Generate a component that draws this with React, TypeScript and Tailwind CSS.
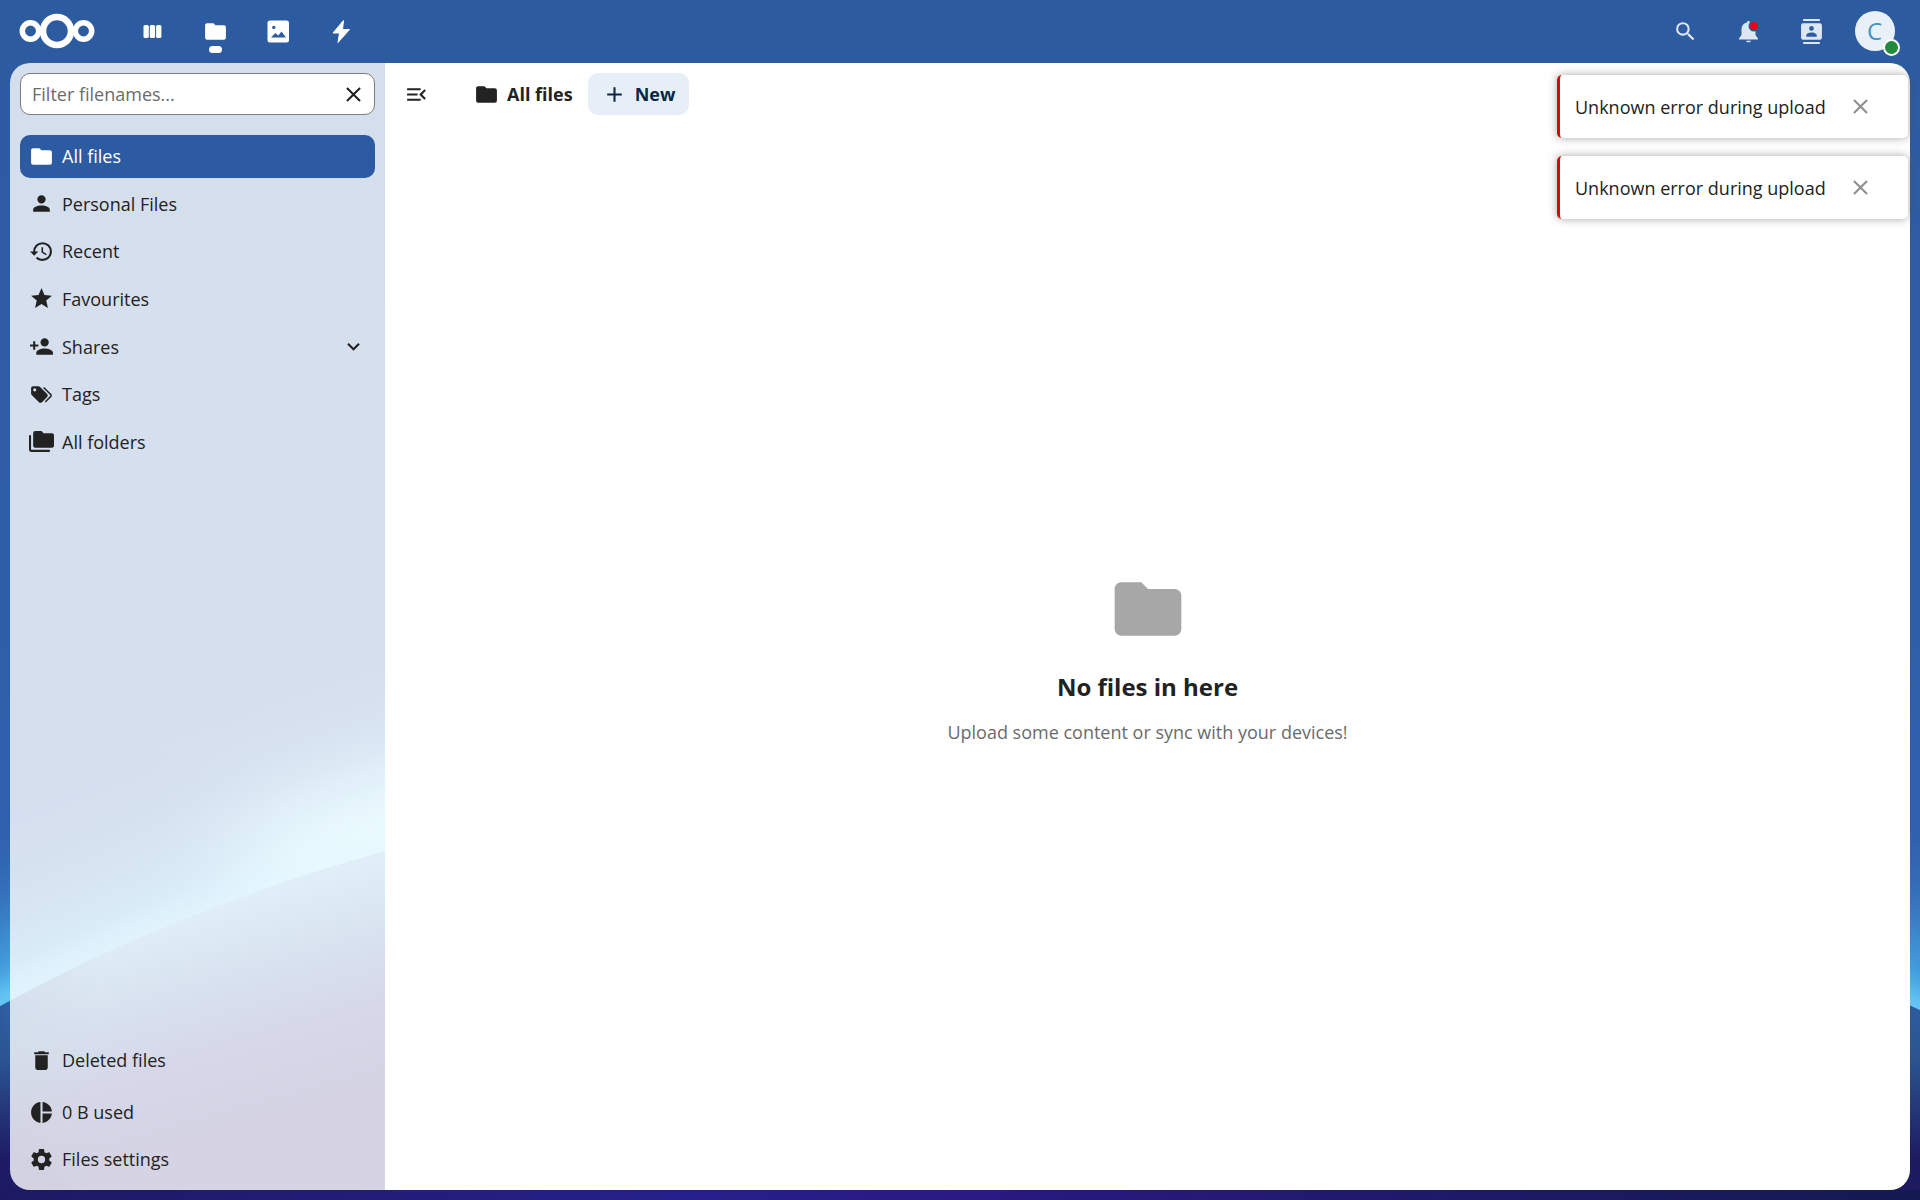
import type { ReactNode } from "react";

const ICONS = {
  folder: "M10,4H4C2.89,4 2,4.89 2,6V18A2,2 0 0,0 4,20H20A2,2 0 0,0 22,18V8C22,6.89 21.1,6 20,6H12L10,4Z",
  account: "M12,4A4,4 0 0,1 16,8A4,4 0 0,1 12,12A4,4 0 0,1 8,8A4,4 0 0,1 12,4M12,14C16.42,14 20,15.79 20,18V20H4V18C4,15.79 7.58,14 12,14Z",
  history: "M13.5,8H12V13L16.28,15.54L17,14.33L13.5,12.25V8M13,3A9,9 0 0,0 4,12H1L4.96,16.03L9,12H6A7,7 0 0,1 13,5A7,7 0 0,1 20,12A7,7 0 0,1 13,19C11.07,19 9.32,18.21 8.06,16.94L6.64,18.36C8.27,20 10.5,21 13,21A9,9 0 0,0 22,12A9,9 0 0,0 13,3",
  star: "M12,17.27L18.18,21L16.54,13.97L22,9.24L14.81,8.62L12,2L9.19,8.62L2,9.24L7.45,13.97L5.82,21L12,17.27Z",
  accountPlus: "M15,14C12.33,14 7,15.33 7,18V20H23V18C23,15.33 17.67,14 15,14M6,10V7H4V10H1V12H4V15H6V12H9V10M15,12A4,4 0 0,0 19,8A4,4 0 0,0 15,4A4,4 0 0,0 11,8A4,4 0 0,0 15,12Z",
  tags: "M5.5,9A1.5,1.5 0 0,0 7,7.5A1.5,1.5 0 0,0 5.5,6A1.5,1.5 0 0,0 4,7.5A1.5,1.5 0 0,0 5.5,9M17.41,11.58C17.77,11.94 18,12.44 18,13C18,13.55 17.78,14.05 17.41,14.41L12.41,19.41C12.05,19.77 11.55,20 11,20C10.45,20 9.95,19.78 9.58,19.41L2.59,12.42C2.22,12.05 2,11.55 2,11V6C2,4.89 2.89,4 4,4H9C9.55,4 10.05,4.22 10.41,4.58L17.41,11.58M13.54,5.71L14.54,4.71L21.41,11.58C21.78,11.94 22,12.45 22,13C22,13.55 21.78,14.05 21.42,14.41L16.04,19.79L15.04,18.79L20.75,13L13.54,5.71Z",
  folders: "M22,4H14L12,2H6A2,2 0 0,0 4,4V16A2,2 0 0,0 6,18H22A2,2 0 0,0 24,16V6A2,2 0 0,0 22,4M2,6H0V11H0V20A2,2 0 0,0 2,22H20V20H2V6Z",
  trash: "M19,4H15.5L14.5,3H9.5L8.5,4H5V6H19M6,19A2,2 0 0,0 8,21H16A2,2 0 0,0 18,19V7H6V19Z",
  pie: "M11,2V22C5.9,21.5 2,17.2 2,12C2,6.8 5.9,2.5 11,2M13,2V11H22C21.5,6.2 17.8,2.5 13,2M13,13V22C17.7,21.5 21.5,17.8 22,13H13Z",
  cog: "M12,15.5A3.5,3.5 0 0,1 8.5,12A3.5,3.5 0 0,1 12,8.5A3.5,3.5 0 0,1 15.5,12A3.5,3.5 0 0,1 12,15.5M19.43,12.97C19.47,12.65 19.5,12.33 19.5,12C19.5,11.67 19.47,11.34 19.43,11L21.54,9.37C21.73,9.22 21.78,8.95 21.66,8.73L19.66,5.27C19.54,5.05 19.27,4.96 19.05,5.05L16.56,6.05C16.04,5.66 15.5,5.32 14.87,5.07L14.5,2.42C14.46,2.18 14.25,2 14,2H10C9.75,2 9.54,2.18 9.5,2.42L9.13,5.07C8.5,5.32 7.96,5.66 7.44,6.05L4.95,5.05C4.73,4.96 4.46,5.05 4.34,5.27L2.34,8.73C2.21,8.95 2.27,9.22 2.46,9.37L4.57,11C4.53,11.34 4.5,11.67 4.5,12C4.5,12.33 4.53,12.65 4.57,12.97L2.46,14.63C2.27,14.78 2.21,15.05 2.34,15.27L4.34,18.73C4.46,18.95 4.73,19.03 4.95,18.95L7.44,17.94C7.96,18.34 8.5,18.68 9.13,18.93L9.5,21.58C9.54,21.82 9.75,22 10,22H14C14.25,22 14.46,21.82 14.5,21.58L14.87,18.93C15.5,18.67 16.04,18.34 16.56,17.94L19.05,18.95C19.27,19.03 19.54,18.95 19.66,18.73L21.66,15.27C21.78,15.05 21.73,14.78 21.54,14.63L19.43,12.97Z",
  chevronDown: "M7.41,8.58L12,13.17L16.59,8.58L18,10L12,16L6,10L7.41,8.58Z",
  close: "M19,6.41L17.59,5L12,10.59L6.41,5L5,6.41L10.59,12L5,17.59L6.41,19L12,13.41L17.59,19L19,17.59L13.41,12L19,6.41Z",
  menuOpen: "M21,15.61L19.59,17L14.58,12L19.59,7L21,8.39L17.44,12L21,15.61M3,6H16V8H3V6M3,13V11H13V13H3M3,18V16H16V18H3Z",
  plus: "M19,13H13V19H11V13H5V11H11V5H13V11H19V13Z",
  magnify: "M9.5,3A6.5,6.5 0 0,1 16,9.5C16,11.11 15.41,12.59 14.44,13.73L14.71,14H15.5L20.5,19L19,20.5L14,15.5V14.71L13.73,14.44C12.59,15.41 11.11,16 9.5,16A6.5,6.5 0 0,1 3,9.5A6.5,6.5 0 0,1 9.5,3M9.5,5C7,5 5,7 5,9.5C5,12 7,14 9.5,14C12,14 14,12 14,9.5C14,7 12,5 9.5,5Z",
  contacts: "M20,0H4V2H20V0M4,24H20V22H4V24M20,4H4A2,2 0 0,0 2,6V18A2,2 0 0,0 4,20H20A2,2 0 0,0 22,18V6A2,2 0 0,0 20,4M12,6.75A2.25,2.25 0 0,1 14.25,9A2.25,2.25 0 0,1 12,11.25A2.25,2.25 0 0,1 9.75,9A2.25,2.25 0 0,1 12,6.75M17,17H7V15.5C7,13.83 10.33,13 12,13C13.67,13 17,13.83 17,15.5V17Z",
};

type IconName = keyof typeof ICONS;

function Icon({ name, className = "size-[25px]" }: { name: IconName; className?: string }) {
  return (
    <svg viewBox="0 0 24 24" className={`shrink-0 ${className}`} fill="currentColor" aria-hidden="true">
      <path d={ICONS[name]} />
    </svg>
  );
}

function Wallpaper() {
  return (
    <svg
      className="absolute inset-0 -z-10 h-full w-full"
      viewBox="0 0 1920 1200"
      preserveAspectRatio="none"
      aria-hidden="true"
    >
      <defs>
        <linearGradient id="sky" x1="0" y1="0" x2="0" y2="1">
          <stop offset="0" stopColor="#2d5ba0" />
          <stop offset="1" stopColor="#3262b2" />
        </linearGradient>
        <linearGradient id="ground" gradientUnits="userSpaceOnUse" x1="0" y1="968" x2="60" y2="1181">
          <stop offset="0" stopColor="#64aadc" />
          <stop offset="0.35" stopColor="#3868ae" />
          <stop offset="0.65" stopColor="#323690" />
          <stop offset="1" stopColor="#2c2478" />
        </linearGradient>
        <linearGradient id="edge" gradientUnits="userSpaceOnUse" x1="0" y1="990" x2="0" y2="1160">
          <stop offset="0" stopColor="#2e5da4" />
          <stop offset="0.4" stopColor="#2b5590" />
          <stop offset="1" stopColor="#1d1a62" />
        </linearGradient>
        <linearGradient id="edgeFade" gradientUnits="userSpaceOnUse" x1="0" y1="0" x2="100" y2="0">
          <stop offset="0" stopColor="#fff" />
          <stop offset="1" stopColor="#000" />
        </linearGradient>
        <mask id="edgeMask">
          <rect width="1920" height="1200" fill="url(#edgeFade)" />
          <rect x="1800" width="120" height="1200" fill="#fff" />
        </mask>
        <linearGradient id="floor" x1="0" y1="0" x2="1" y2="0">
          <stop offset="0" stopColor="#1d1a62" />
          <stop offset="0.35" stopColor="#26208a" />
          <stop offset="0.5" stopColor="#2a1982" />
          <stop offset="1" stopColor="#141a50" />
        </linearGradient>
        <clipPath id="above">
          <path d="M0,0H1920V1010C1620,870 1300,770 960,770C700,770 480,824 385,851Q175,910 0,1006Z" />
        </clipPath>
        <filter id="glow" filterUnits="userSpaceOnUse" x="-400" y="400" width="2800" height="1000">
          <feGaussianBlur stdDeviation="50" />
        </filter>
        <filter id="glowTight" filterUnits="userSpaceOnUse" x="-400" y="400" width="2800" height="1000">
          <feGaussianBlur stdDeviation="14" />
        </filter>
      </defs>
      <rect width="1920" height="1200" fill="url(#ground)" />
      <rect width="1920" height="1200" fill="url(#edge)" mask="url(#edgeMask)" />
      <rect y="1190" width="1920" height="10" fill="url(#floor)" />
      <g clipPath="url(#above)">
        <rect width="1920" height="1200" fill="url(#sky)" />
        <path
          d="M-200,1110Q175,915 385,856C480,824 700,770 960,770C1300,770 1620,870 2120,1100"
          fill="none"
          stroke="#48b4ee"
          strokeWidth="130"
          filter="url(#glow)"
        />
        <path
          d="M270,905Q330,875 400,855C480,824 700,770 960,770"
          fill="none"
          stroke="#a8f6ff"
          strokeWidth="150"
          filter="url(#glow)"
        />
        <path
          d="M-100,1056Q175,910 385,851C480,824 700,770 960,770C1300,770 1620,870 2020,1056"
          fill="none"
          stroke="#7adcff"
          strokeWidth="22"
          filter="url(#glowTight)"
        />
      </g>
    </svg>
  );
}

function Logo() {
  return (
    <svg className="h-[36px] w-[76px]" viewBox="0 0 76 36" fill="none" stroke="#fff" aria-hidden="true">
      <circle cx="38" cy="18" r="14" strokeWidth="6.5" />
      <circle cx="11.5" cy="18" r="8.2" strokeWidth="5.5" />
      <circle cx="64.5" cy="18" r="8.2" strokeWidth="5.5" />
    </svg>
  );
}

function HeaderLink({ label, active, children }: { label: string; active?: boolean; children: ReactNode }) {
  return (
    <a href="#" aria-label={label} className="relative flex h-[62px] w-[63px] items-center justify-center text-white">
      {children}
      {active && <span className="absolute bottom-[9px] left-[25px] h-[7px] w-[13px] rounded-full bg-white" />}
    </a>
  );
}

function Header() {
  return (
    <header className="flex shrink-0 items-center justify-between pr-[14px] pb-px pl-[19px]">
      <div className="flex items-center">
        <a href="#" aria-label="Nextcloud">
          <Logo />
        </a>
        <nav aria-label="Apps" className="ml-[26px] flex">
          <HeaderLink label="Dashboard">
            <svg className="size-[25px]" viewBox="0 0 25 25" fill="#fff">
              <rect x="3.5" y="6" width="5.3" height="13" rx="1.5" />
              <rect x="9.8" y="6" width="5.3" height="13" rx="1.5" />
              <rect x="16.1" y="6" width="5.3" height="13" rx="1.5" />
            </svg>
          </HeaderLink>
          <HeaderLink label="Files" active>
            <Icon name="folder" />
          </HeaderLink>
          <HeaderLink label="Photos">
            <svg className="size-[25px]" viewBox="0 0 25 25" fill="#fff">
              <path
                fillRule="evenodd"
                d="M4,1.5H20.5A2.5,2.5 0 0 1 23,4V21A2.5,2.5 0 0 1 20.5,23.5H4A2.5,2.5 0 0 1 1.5,21V4A2.5,2.5 0 0 1 4,1.5ZM7.8,6.7A1.7,1.7 0 1 0 7.8,10.1A1.7,1.7 0 1 0 7.8,6.7ZM5,18.5H20L15.5,12.5L12.3,16.5L9.3,14Z"
              />
            </svg>
          </HeaderLink>
          <HeaderLink label="Activity">
            <svg className="size-[25px]" viewBox="0 0 25 25" fill="#fff" stroke="#fff" strokeLinejoin="round">
              <path d="M14.5,1.5L4,14H10.5L9,23.5L20.5,10.5H13.5Z" />
            </svg>
          </HeaderLink>
        </nav>
      </div>
      <div className="flex items-center text-[#dfe6f3]">
        <button type="button" aria-label="Search" className="flex h-[62px] w-[63px] items-center justify-center">
          <Icon name="magnify" />
        </button>
        <button type="button" aria-label="Notifications" className="flex h-[62px] w-[63px] items-center justify-center">
          <svg className="size-[25px]" viewBox="0 0 25 25" fill="currentColor">
            <path d="M11,3.5C11,1.5 14,1.5 14,3.5C18,4.5 19.5,7 19.5,11V16L22,19.5V20.5H3V19.5L5.5,16V11C5.5,7 7,4.5 11,3.5Z M10,21.7H15C14.5,23.8 10.5,23.8 10,21.7Z" />
            <circle cx="18" cy="7" r="5.5" fill="#2d5ba1" />
            <circle cx="18" cy="7" r="4" fill="#e40613" />
          </svg>
        </button>
        <button type="button" aria-label="Contacts" className="flex h-[62px] w-[63px] items-center justify-center">
          <Icon name="contacts" />
        </button>
        <button type="button" aria-label="Account menu" className="flex h-[62px] w-[63px] items-center justify-center">
          <span className="relative flex size-[40px] items-center justify-center rounded-full bg-[#e9f1f8] text-[24px] text-[#4495c4]">
            C
            <span className="absolute -right-[5px] -bottom-[5px] size-[17px] rounded-full border-2 border-white bg-[#218a3c]" />
          </span>
        </button>
      </div>
    </header>
  );
}

function NavItem({ icon, label, active, children }: { icon: IconName; label: string; active?: boolean; children?: ReactNode }) {
  return (
    <li
      className={
        active
          ? "flex min-h-[42px] items-center rounded-[10px] bg-[#2c5ba1] text-white"
          : "flex min-h-[42px] items-center rounded-[10px]"
      }
    >
      <a href="#" className="flex flex-1 items-center gap-[8px] pl-[9px]">
        <Icon name={icon} />
        {label}
      </a>
      {children}
    </li>
  );
}

function Sidebar() {
  return (
    <aside className="flex w-[375px] shrink-0 flex-col bg-white/80 p-[10px]">
      <div className="relative">
        <input
          type="text"
          aria-label="Filter filenames"
          placeholder="Filter filenames..."
          className="block h-[42px] w-full rounded-[10px] border border-[#7d7d7d] bg-white pr-[44px] pl-[11px] outline-none placeholder:text-[#6b6b6b]"
        />
        <button type="button" aria-label="Clear filter" className="absolute top-0 right-0 flex h-[42px] w-[44px] items-center justify-center">
          <Icon name="close" />
        </button>
      </div>
      <ul className="mt-[20px] grid min-h-[328px] auto-rows-fr gap-[5px]">
        <NavItem icon="folder" label="All files" active />
        <NavItem icon="account" label="Personal Files" />
        <NavItem icon="history" label="Recent" />
        <NavItem icon="star" label="Favourites" />
        <NavItem icon="accountPlus" label="Shares">
          <button type="button" aria-label="Expand shares" className="flex h-[42px] w-[44px] items-center justify-center">
            <Icon name="chevronDown" />
          </button>
        </NavItem>
        <NavItem icon="tags" label="Tags" />
        <NavItem icon="folders" label="All folders" />
      </ul>
      <ul className="mt-auto">
        <NavItem icon="trash" label="Deleted files" />
      </ul>
      <ul className="mt-[10px] grid gap-[5px]">
        <NavItem icon="pie" label="0 B used" />
        <NavItem icon="cog" label="Files settings" />
      </ul>
    </aside>
  );
}

function Toast() {
  return (
    <div
      role="alert"
      className="flex h-[63px] w-[351px] items-center justify-between rounded-[5px] border-l-[3px] border-[#db0606] bg-white pr-[35px] pl-[15px] shadow-[0_0_8px_0_rgba(77,77,77,0.5)]"
    >
      <span className="whitespace-nowrap">Unknown error during upload</span>
      <button type="button" aria-label="Close" className="text-[#8f8f8f]">
        <Icon name="close" />
      </button>
    </div>
  );
}

export default function App() {
  return (
    <div className="relative isolate flex min-h-screen flex-col overflow-hidden font-['Open_Sans',sans-serif] text-[18px] leading-[24px] text-[#222222]">
      <Wallpaper />
      <Header />
      <div className="mx-[10px] mb-[10px] flex flex-1 overflow-hidden rounded-[20px]">
        <Sidebar />
        <main className="flex flex-1 flex-col bg-white">
          <div className="flex items-center pt-[10px] pl-[10px]">
            <button type="button" aria-label="Close navigation" className="flex size-[42px] items-center justify-center">
              <Icon name="menuOpen" />
            </button>
            <a href="#" className="ml-[37px] flex h-[42px] items-center gap-[8px] font-bold">
              <Icon name="folder" />
              All files
            </a>
            <button
              type="button"
              className="ml-[15px] flex h-[42px] items-center gap-[8px] rounded-[10px] bg-[#e6eff7] pr-[14px] pl-[14px] font-bold text-[#0c2744]"
            >
              <Icon name="plus" />
              New
            </button>
          </div>
          <div className="flex flex-1 flex-col items-center justify-center pt-[7px]">
            <Icon name="folder" className="size-[80px] text-[#a7a7a7]" />
            <h2 className="mt-[19px] text-[24px] leading-[38px] font-bold">No files in here</h2>
            <p className="mt-[14px] text-[#6b6b6b]">Upload some content or sync with your devices!</p>
          </div>
        </main>
      </div>
      <div className="absolute top-[75px] right-[12px] flex flex-col gap-[18px]">
        <Toast />
        <Toast />
      </div>
    </div>
  );
}
